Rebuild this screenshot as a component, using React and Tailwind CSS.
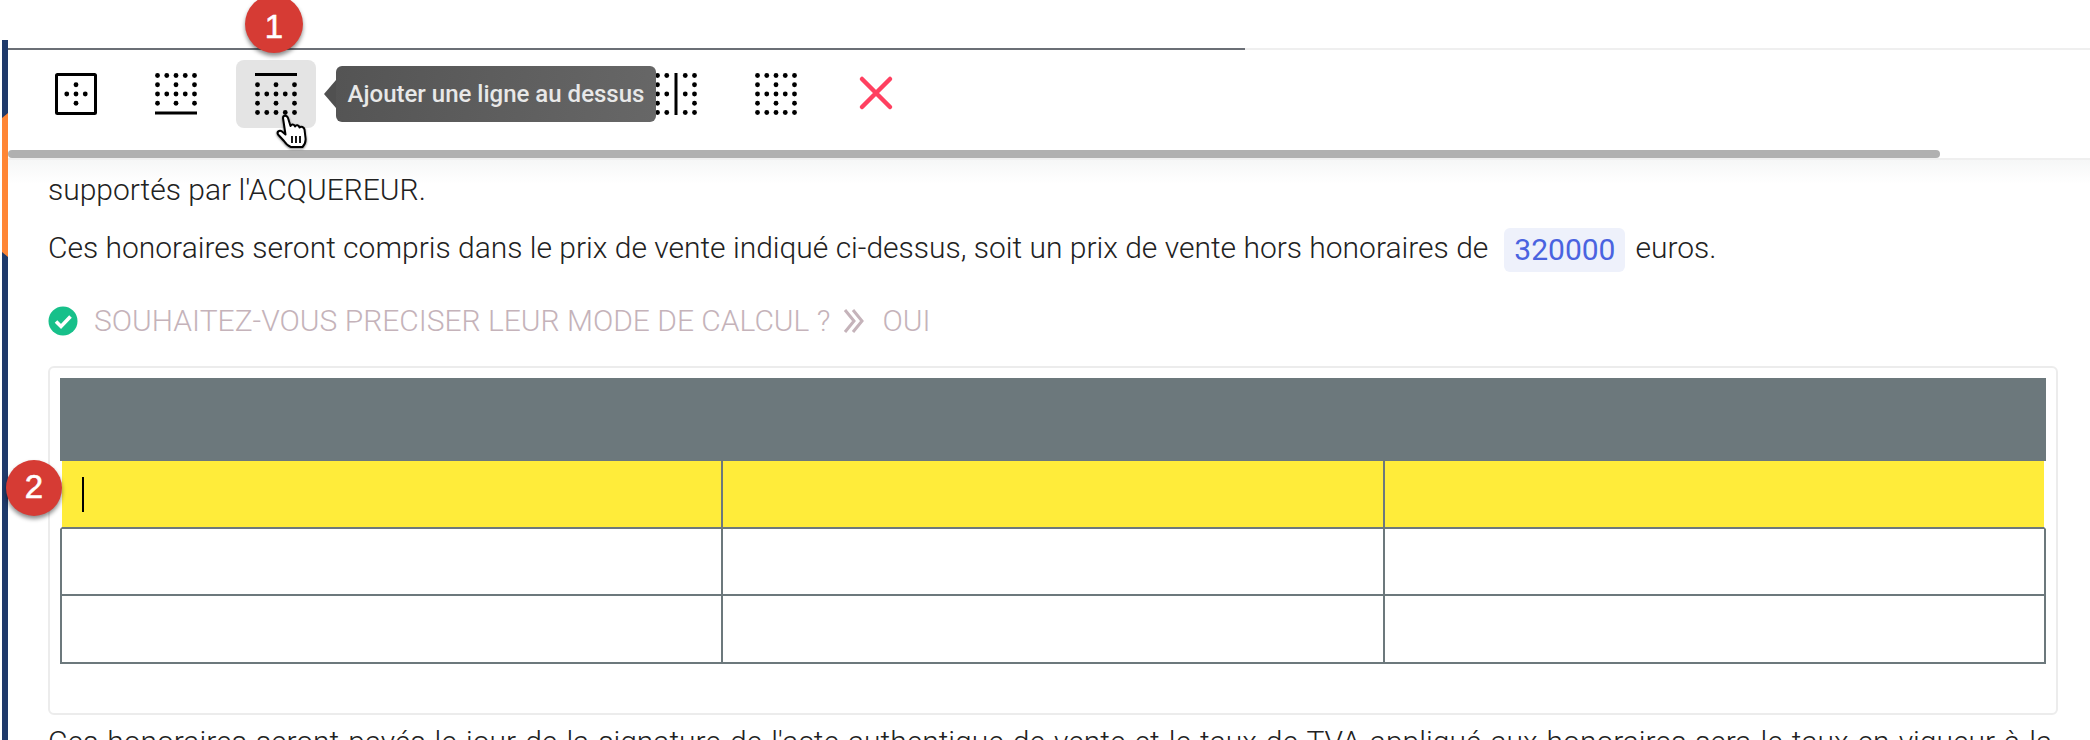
const COLS = [2.5, 11.75, 21, 30.25, 39.5];

// grille de points des icones de bordure
const FULL = [0, 1, 2, 3, 4];
const SPARSE = [0, 2, 4];

function Dots({ rows }) {
  return rows.map((row, r) =>
    row.cols.map((c) => <circle key={`${r}-${c}`} cx={COLS[c]} cy={COLS[row.y]} r="2.4" fill="#000" />)
  );
}

function TableIcon({ type }) {
  return (
    <svg width="42" height="42" viewBox="0 0 42 42">
      {type === "outer" && (
        <>
          <rect x="1.5" y="1.5" width="39" height="39" rx="1" fill="none" stroke="#000" strokeWidth="3" />
          <Dots rows={[{ y: 1, cols: [2] }, { y: 2, cols: [1, 2, 3] }, { y: 3, cols: [2] }]} />
        </>
      )}
      {type === "bottom" && (
        <>
          <Dots rows={[{ y: 0, cols: FULL }, { y: 1, cols: SPARSE }, { y: 2, cols: FULL }, { y: 3, cols: SPARSE }]} />
          <rect x="0" y="38.5" width="42" height="3" fill="#000" />
        </>
      )}
      {type === "top" && (
        <>
          <rect x="0" y="0" width="42" height="3" fill="#000" />
          <Dots rows={[{ y: 1, cols: SPARSE }, { y: 2, cols: FULL }, { y: 3, cols: SPARSE }, { y: 4, cols: FULL }]} />
        </>
      )}
      {type === "vertical" && (
        <>
          <Dots
            rows={[
              { y: 0, cols: [0, 1, 3, 4] },
              { y: 1, cols: [0, 4] },
              { y: 2, cols: [0, 1, 3, 4] },
              { y: 3, cols: [0, 4] },
              { y: 4, cols: [0, 1, 3, 4] },
            ]}
          />
          <rect x="19.5" y="0" width="3" height="42" fill="#000" />
        </>
      )}
      {type === "clear" && (
        <Dots rows={[{ y: 0, cols: FULL }, { y: 1, cols: SPARSE }, { y: 2, cols: FULL }, { y: 3, cols: SPARSE }, { y: 4, cols: FULL }]} />
      )}
    </svg>
  );
}

function ToolButton({ active, children }) {
  return (
    <button className={`flex h-[68px] w-[80px] items-center justify-center rounded-lg ${active ? "bg-[#e4e4e4]" : ""}`}>
      {children}
    </button>
  );
}

function NumberBadge({ className, children }) {
  return (
    <div
      className={`absolute flex items-center justify-center rounded-full bg-[#d63b34] font-['Liberation_Sans',sans-serif] text-white shadow-[0_3px_4px_rgba(0,0,0,0.45)] [-webkit-text-stroke:0.6px_white] ${className}`}
    >
      {children}
    </div>
  );
}

function HandCursor() {
  return (
    <svg className="absolute left-[276px] top-[114px] drop-shadow-[0_1px_1px_rgba(0,0,0,0.5)]" width="32" height="34" viewBox="0 0 32 34">
      <path
        d="M7 4C7 1 11 1 12 4L14.5 12C15.5 10 18 10 19 12.5C20 10.5 23 11 23.5 13.5C25 12 28 13 28.5 15.5L29.5 24C30 28 28.5 31 26.5 33L15 33C12 32 10 30 8 27L2.5 21C0 18 3.5 15.5 6 17.5L9.5 20.5Z"
        fill="#fff"
        stroke="#000"
        strokeWidth="2"
        strokeLinejoin="round"
      />
      <path d="M16 22V29M20 22V29M24 22V29" stroke="#000" strokeWidth="1.8" fill="none" />
    </svg>
  );
}

export default function App() {
  return (
    <div className="relative flex h-[740px] w-full overflow-hidden bg-white pl-[2px] font-[Roboto,sans-serif]">
      {/* barre de gauche */}
      <div className="mt-[40px] w-[6px] shrink-0 bg-[#1f3a6b]">
        <div className="mt-[73px] h-[144px] bg-[#ff8534] [clip-path:polygon(0_5px,100%_0,100%_100%,0_139px)]"></div>
      </div>

      <div className="min-w-0 flex-1">
        <div className="h-[48px]"></div>
        <div className="flex h-[2px]">
          <div className="w-[1237px] bg-[#6b6f76]"></div>
          <div className="flex-1 bg-[#efefef]"></div>
        </div>

        <div className="flex h-[100px] gap-[20px] pl-[28px] pt-[10px]">
          <ToolButton><TableIcon type="outer" /></ToolButton>
          <ToolButton><TableIcon type="bottom" /></ToolButton>
          <ToolButton active><TableIcon type="top" /></ToolButton>
          <ToolButton><TableIcon type="clear" /></ToolButton>
          <ToolButton><TableIcon type="clear" /></ToolButton>
          <ToolButton><TableIcon type="clear" /></ToolButton>
          <ToolButton><TableIcon type="vertical" /></ToolButton>
          <ToolButton><TableIcon type="clear" /></ToolButton>
          <ToolButton>
            <svg width="42" height="42" viewBox="0 0 42 42">
              <path d="M7 6L35 34M35 6L7 34" stroke="#ff4060" strokeWidth="4.5" strokeLinecap="round" />
            </svg>
          </ToolButton>
        </div>

        <div className="h-[8px] w-[1932px] rounded-full bg-[#b0b0b0]"></div>

        <div className="border-t-2 border-[#efefef] bg-[linear-gradient(#f6f7f7,#fff_24px)] pl-[40px] pr-[32px] pt-[12px] text-[30px] font-light leading-[36px] text-[#222]">
          <p>supportés par l'ACQUEREUR.</p>
          <p className="mt-[16px] flex items-center">
            Ces honoraires seront compris dans le prix de vente indiqué ci-dessus, soit un prix de vente hors honoraires de
            <span className="ml-[16px] mr-[10px] mt-[4px] flex h-[44px] items-center rounded-md bg-[#eef1fb] px-[10px] font-normal text-[#4a63e0]">320000</span>
            euros.
          </p>

          <div className="mt-[31px] flex items-center text-[#c5b3ba]">
            <svg width="30" height="30" viewBox="0 0 30 30" className="mr-[16px]">
              <circle cx="15" cy="15" r="14.5" fill="#17c08a" />
              <path d="M8 15.5L13 20.5L22.5 10.5" fill="none" stroke="#fff" strokeWidth="3.6" />
            </svg>
            <span>SOUHAITEZ-VOUS PRECISER LEUR MODE DE CALCUL ?</span>
            <svg width="22" height="26" viewBox="0 0 22 26" className="ml-[13px] mr-[17px]">
              <path d="M2 2L11 13L2 24M10 2L19 13L10 24" fill="none" stroke="#c5b3ba" strokeWidth="3" />
            </svg>
            <span>OUI</span>
          </div>

          <div className="mt-[27px] rounded-md border-2 border-[#ececec] px-[10px] pb-[49px] pt-[10px]">
            <table className="w-full table-fixed border-separate border-spacing-0">
              <colgroup>
                <col className="w-[663px]" />
                <col className="w-[662px]" />
                <col className="w-[661px]" />
              </colgroup>
              <tbody>
                <tr className="h-[83px] bg-[#6c787c]">
                  <td></td>
                  <td></td>
                  <td></td>
                </tr>
                <tr className="h-[68px] bg-[#ffec3a]">
                  <td className="border-b-2 border-l-2 border-r-2 border-b-[#6c787c] border-l-white border-r-[#6c787c] pl-[20px]">
                    <div className="h-[35px] w-[2px] bg-black"></div>
                  </td>
                  <td className="border-b-2 border-r-2 border-b-[#6c787c] border-r-[#6c787c]"></td>
                  <td className="border-b-2 border-r-2 border-b-[#6c787c] border-r-white"></td>
                </tr>
                <tr className="h-[67px]">
                  <td className="border-b-2 border-l-2 border-r-2 border-[#6c787c]"></td>
                  <td className="border-b-2 border-r-2 border-[#6c787c]"></td>
                  <td className="border-b-2 border-r-2 border-[#6c787c]"></td>
                </tr>
                <tr className="h-[68px]">
                  <td className="border-b-2 border-l-2 border-r-2 border-[#6c787c]"></td>
                  <td className="border-b-2 border-r-2 border-[#6c787c]"></td>
                  <td className="border-b-2 border-r-2 border-[#6c787c]"></td>
                </tr>
              </tbody>
            </table>
          </div>

          <p className="mr-[6px] mt-[9px] text-justify [text-align-last:justify]">
            Ces honoraires seront payés le jour de la signature de l'acte authentique de vente et le taux de TVA appliqué aux honoraires sera le taux en vigueur à la
          </p>
        </div>
      </div>

      {/* infobulle du bouton survole */}
      <div className="absolute left-[336px] top-[66px] flex h-[56px] w-[320px] items-center justify-center rounded-md bg-[linear-gradient(100deg,#545454,#676767)] text-[24px] font-medium text-[#e8e8e8]">
        <div className="absolute left-[-12px] top-[14px] h-0 w-0 border-y-[14px] border-r-[12px] border-y-transparent border-r-[#505050]"></div>
        Ajouter une ligne au dessus
      </div>

      <HandCursor />

      <NumberBadge className="left-[245px] top-[-5px] h-[58px] w-[58px] pt-[6px] text-[33px]">1</NumberBadge>
      <NumberBadge className="left-[6px] top-[460px] h-[56px] w-[56px] pb-[2px] text-[33px]">2</NumberBadge>
    </div>
  );
}
